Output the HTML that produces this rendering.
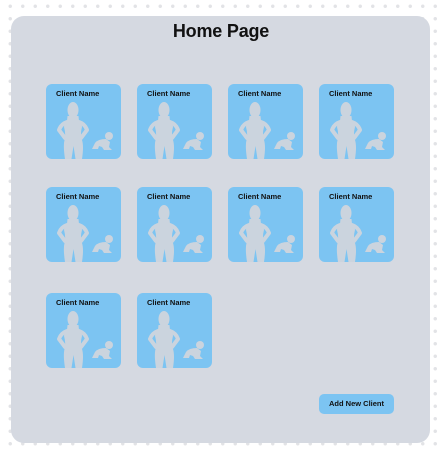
<!DOCTYPE html>
<html><head><meta charset="utf-8"><style>
html,body{margin:0;padding:0;width:442px;height:450px;overflow:hidden;background:#fff;
background-image:radial-gradient(circle,#e2e3e6 1.5px,transparent 2px);background-size:12.5px 12.5px;background-position:4px 0px;font-family:"Liberation Sans",sans-serif}
.panel{position:absolute;left:11px;top:16px;width:419px;height:427px;background:#d5d9e1;border-radius:13px}
h1{position:absolute;left:0;width:442px;top:21px;margin:0;text-align:center;font-size:18px;font-weight:bold;color:#111;letter-spacing:-0.2px}
.card{position:absolute;width:75px;height:75px;background:#7cc4f2;border-radius:6px;overflow:hidden}
.card span{position:absolute;left:10px;top:5px;font-size:7.5px;font-weight:bold;color:#111}
.card svg{position:absolute;left:0;top:0}
.btn{position:absolute;left:319px;top:394px;width:75px;height:20px;background:#7cc4f2;border-radius:5px;font-size:7.5px;font-weight:bold;color:#111;text-align:center;line-height:20px}
</style></head><body>
<div class="panel"></div>
<h1>Home Page</h1>
<svg width="0" height="0" style="position:absolute"><defs><g id="s" fill="#cbd4de">
<ellipse cx="27" cy="26" rx="5.5" ry="8"/>
<path d="M21.5 32 L32.5 32 L33 37 Q36 39 36 43 Q34 50 36 56 Q38 62 36 75 L29.5 75 L27.5 62 L25.5 75 L19 75 Q17 62 18.5 56 Q20 50 18 43 Q18 39 21 37 Z"/>
<path d="M21 38 Q15 40 13 46 L19 54 M33 38 Q39 40 41 46 L35 54" fill="none" stroke="#cbd4de" stroke-width="4" stroke-linecap="round" stroke-linejoin="round"/>
<circle cx="63" cy="52" r="4"/>
<path d="M60 55 Q52 55 49 59 Q47 63 46 65 L52 65 L53 62 L56 63 L58 66 L66 66 L63 63 L64 58 Z"/>
</g></defs></svg>
<div class="card" style="left:46px;top:84px"><span>Client Name</span><svg width="75" height="75"><use href="#s"/></svg></div>
<div class="card" style="left:137px;top:84px"><span>Client Name</span><svg width="75" height="75"><use href="#s"/></svg></div>
<div class="card" style="left:228px;top:84px"><span>Client Name</span><svg width="75" height="75"><use href="#s"/></svg></div>
<div class="card" style="left:319px;top:84px"><span>Client Name</span><svg width="75" height="75"><use href="#s"/></svg></div>
<div class="card" style="left:46px;top:187px"><span>Client Name</span><svg width="75" height="75"><use href="#s"/></svg></div>
<div class="card" style="left:137px;top:187px"><span>Client Name</span><svg width="75" height="75"><use href="#s"/></svg></div>
<div class="card" style="left:228px;top:187px"><span>Client Name</span><svg width="75" height="75"><use href="#s"/></svg></div>
<div class="card" style="left:319px;top:187px"><span>Client Name</span><svg width="75" height="75"><use href="#s"/></svg></div>
<div class="card" style="left:46px;top:293px"><span>Client Name</span><svg width="75" height="75"><use href="#s"/></svg></div>
<div class="card" style="left:137px;top:293px"><span>Client Name</span><svg width="75" height="75"><use href="#s"/></svg></div>
<div class="btn">Add New Client</div>
</body></html>
